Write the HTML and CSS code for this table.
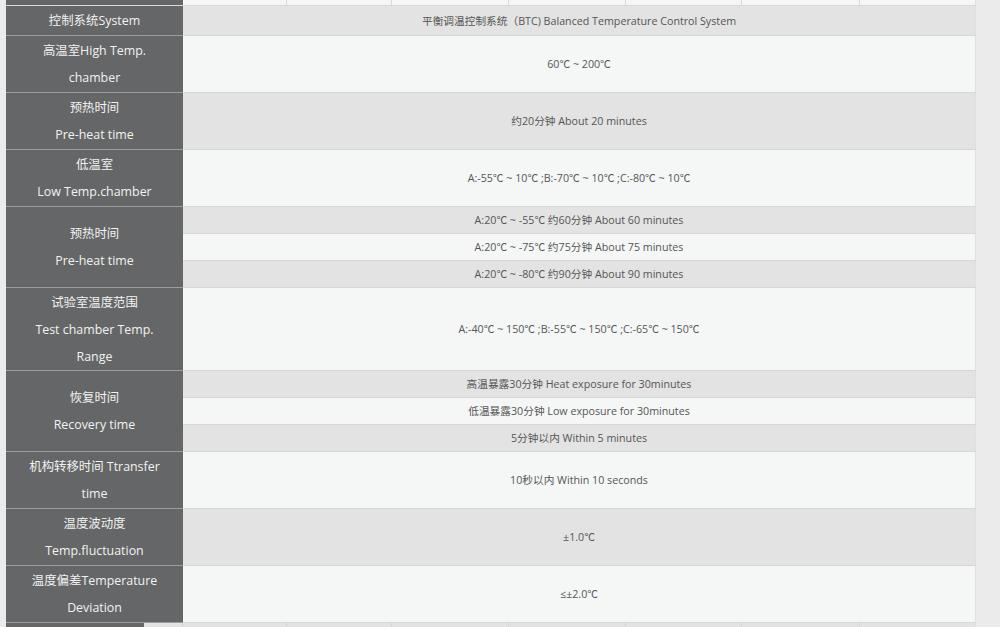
FILE: index.html
```html
<!DOCTYPE html>
<html lang="zh-CN">
<head>
<meta charset="utf-8">
<title>技术参数</title>
<link rel="stylesheet" href="styles.css">
</head>
<body>
<div class="page">
  <div class="strip strip-top">
    <div class="s dark"></div>
    <div class="s"></div><div class="s"></div><div class="s"></div><div class="s"></div>
    <div class="s"></div><div class="s"></div><div class="s"></div>
  </div>

  <div class="spec">
    <div class="k r1">控制系统System</div>
    <div class="v gray r1">平衡调温控制系统（BTC) Balanced Temperature Control System</div>

    <div class="k r2">高温室High Temp.<br>chamber</div>
    <div class="v white r2">60℃ ~ 200℃</div>

    <div class="k r2">预热时间<br>Pre-heat time</div>
    <div class="v gray r2">约20分钟 About 20 minutes</div>

    <div class="k r2">低温室<br>Low Temp.chamber</div>
    <div class="v white r2">A:-55℃ ~ 10℃ ;B:-70℃ ~ 10℃ ;C:-80℃ ~ 10℃</div>

    <div class="k span3">预热时间<br>Pre-heat time</div>
    <div class="v gray rs">A:20℃ ~ -55℃ 约60分钟 About 60 minutes</div>
    <div class="v white rs">A:20℃ ~ -75℃ 约75分钟 About 75 minutes</div>
    <div class="v gray rs">A:20℃ ~ -80℃ 约90分钟 About 90 minutes</div>

    <div class="k r3">试验室温度范围<br>Test chamber Temp.<br>Range</div>
    <div class="v white r3">A:-40℃ ~ 150℃ ;B:-55℃ ~ 150℃ ;C:-65℃ ~ 150℃</div>

    <div class="k span3">恢复时间<br>Recovery time</div>
    <div class="v gray rs">高温暴露30分钟 Heat exposure for 30minutes</div>
    <div class="v white rs">低温暴露30分钟 Low exposure for 30minutes</div>
    <div class="v gray rs">5分钟以内 Within 5 minutes</div>

    <div class="k r2">机构转移时间 Ttransfer<br>time</div>
    <div class="v white r2">10秒以内 Within 10 seconds</div>

    <div class="k r2">温度波动度<br>Temp.fluctuation</div>
    <div class="v gray r2">±1.0℃</div>

    <div class="k r2">温度偏差Temperature<br>Deviation</div>
    <div class="v white r2">≤±2.0℃</div>
  </div>

  <div class="strip strip-bottom">
    <div class="s dark"></div>
    <div class="s"></div>
    <div class="s"></div><div class="s"></div><div class="s"></div><div class="s"></div>
    <div class="s"></div><div class="s"></div><div class="s"></div>
  </div>
</div>
</body>
</html>
```

FILE: styles.css
```css
html, body {
  margin: 0;
  padding: 0;
  background: #ebebeb;
  height: 100%;
  overflow: hidden;
}

.page {
  margin-left: 6px;
  width: 970px;
  font-family: "Open Sans", "Noto Sans CJK SC", sans-serif;
}

.strip {
  display: grid;
}

.strip-top {
  height: 6px;
  grid-template-columns: 177px 104px 105px 117px 117px 116px 118px 116px;
  border-bottom: 1px solid #d9d9d9;
  box-sizing: border-box;
}

.strip-top .s {
  background: #f5f7f7;
  border-right: 1px solid #dadada;
}

.strip-bottom {
  height: 10px;
  grid-template-columns: 138px 39px 104px 105px 117px 117px 116px 118px 116px;
}

.strip-bottom .s {
  background: #e3e3e3;
  border-right: 1px solid #d4d4d4;
}

.strip .s.dark {
  background: #656667;
  border-right: none;
}

.strip-top .s:last-child,
.strip-bottom .s:last-child {
  border-right: 1px solid #e0e0e0;
}

.spec {
  display: grid;
  grid-template-columns: 177px 1fr;
  grid-template-rows: 30px 57px 57px 57px 27px 27px 27px 83px 27px 27px 27px 57px 57px 57px;
}

.k, .v {
  box-sizing: border-box;
  display: flex;
  align-items: center;
  justify-content: center;
  text-align: center;
  border-bottom: 1px solid #d6d6d6;
}

.k {
  grid-column: 1;
  background: #656667;
  color: #f2f2f2;
  font-size: 12.4px;
  line-height: 27px;
  border-bottom-color: #9b9c9d;
}

.span3 {
  grid-row: span 3;
}

.v {
  grid-column: 2;
  color: #555555;
  font-size: 10.7px;
  line-height: 16px;
  border-right: 1px solid #e0e0e0;
}

.gray {
  background: #e3e3e3;
}

.white {
  background: #f5f7f7;
}
```
